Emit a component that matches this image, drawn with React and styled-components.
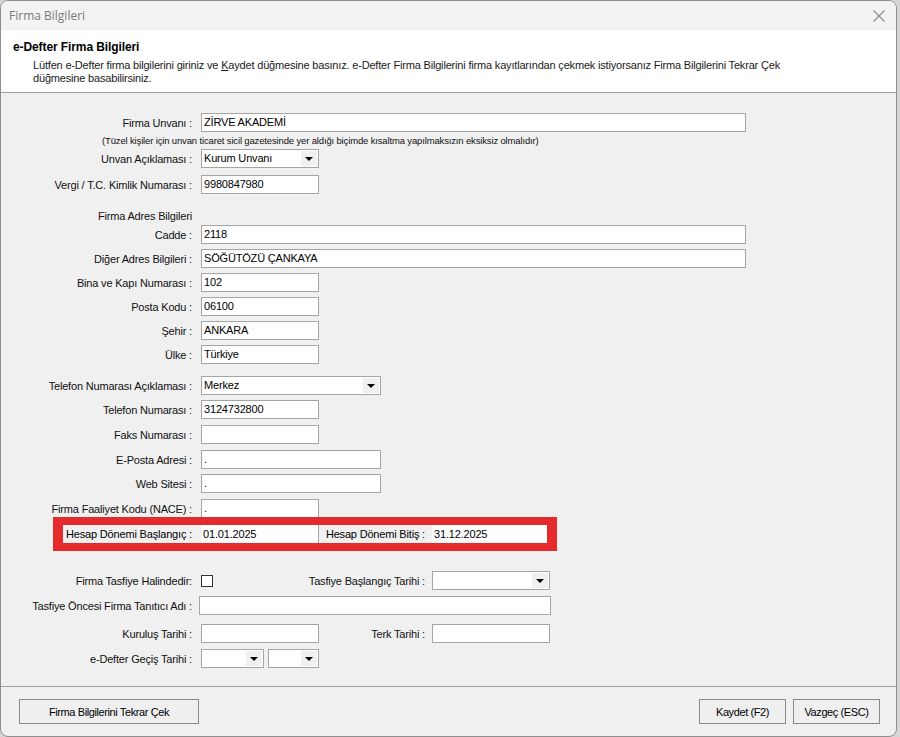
import React from "react";
import styled, { createGlobalStyle } from "styled-components";

const GlobalStyle = createGlobalStyle`
  html, body {
    margin: 0;
    padding: 0;
    background: #d6d6d6;
  }
  * {
    box-sizing: border-box;
  }
`;

const FONT = `"Liberation Sans", Arial, sans-serif`;

// Dialog shell
const Window = styled.div`
  width: 897px;
  height: 737px;
  display: flex;
  flex-direction: column;
  background: #f0f0f0;
  border: 1px solid #8e8e8e;
  border-radius: 8px;
  overflow: hidden;
  font-family: ${FONT};
  font-size: 11px;
  letter-spacing: -0.18px;
  color: #000;
`;

const TitleBar = styled.div`
  height: 29px;
  flex: none;
  display: flex;
  align-items: center;
  justify-content: space-between;
  padding: 0 8px 0 8px;
  background: #f3f3f3;
  font-family: "Open Sans", "Noto Sans", sans-serif;
  font-size: 12px;
  letter-spacing: 0;
  color: #7a7a7a;
`;

const CloseButton = styled.div`
  width: 14px;
  height: 14px;
  display: flex;
  margin-right: 2px;
`;

const Header = styled.div`
  height: 63px;
  flex: none;
  background: #fff;
  border-bottom: 1px solid #a0a0a0;
  padding: 10px 0 0 12px;
`;

const HeaderTitle = styled.div`
  font-weight: bold;
  font-size: 12px;
  letter-spacing: -0.1px;
  line-height: 14px;
`;

const HeaderText = styled.div`
  margin: 5px 0 0 20px;
  line-height: 13px;
  color: #1a1a1a;

  u {
    text-decoration: underline;
  }
`;

const Body = styled.div`
  flex: 1;
  padding-top: 20px;
`;

const Row = styled.div`
  display: flex;
  align-items: center;
  height: ${(p) => p.$h || 19}px;
  margin-top: ${(p) => p.$mt || 0}px;
  padding-left: ${(p) => p.$pl || 0}px;
`;

const Label = styled.div`
  flex: none;
  width: ${(p) => p.$w || 191}px;
  margin-right: ${(p) => p.$gap ?? 9}px;
  text-align: right;
  white-space: nowrap;
  color: #111;
`;

const Hint = styled.div`
  font-size: 9.5px;
  letter-spacing: -0.15px;
  color: #111;
  white-space: nowrap;
`;

const TextBox = styled.div`
  flex: none;
  width: ${(p) => p.$w}px;
  height: 19px;
  margin-right: ${(p) => p.$mr || 0}px;
  border: 1px solid #a5a5a5;
  background: #fff;
  padding-left: 2px;
  line-height: 17px;
  white-space: nowrap;
  overflow: hidden;
`;

const SelectBox = styled(TextBox)`
  display: flex;
  padding: 1px 1px 1px 2px;
  line-height: 15px;
`;

const SelectValue = styled.div`
  flex: 1;
`;

const ArrowBox = styled.div`
  flex: none;
  width: 16px;
  display: flex;
  align-items: center;
  justify-content: center;
  background: #f0f0f0;

  &::after {
    content: "";
    border-left: 4px solid transparent;
    border-right: 4px solid transparent;
    border-top: 4px solid #000;
    margin-top: 1px;
  }
`;

const Cell = styled.div`
  flex: none;
  width: ${(p) => p.$w}px;
  display: flex;
  align-items: center;
`;

const CheckBox = styled.div`
  width: 12px;
  height: 12px;
  border: 1px solid #333;
  background: #fff;
`;

// Red annotation around the period fields
const Highlight = styled.div`
  display: flex;
  height: 34px;
  margin-left: 52px;
  border-style: solid;
  border-color: #e52a2d;
  border-width: 8px 10px;
`;

const PeriodLabel = styled.div`
  flex: none;
  width: ${(p) => p.$w}px;
  padding-right: ${(p) => p.$pr}px;
  text-align: right;
  line-height: 18px;
  white-space: nowrap;
  background: #f0f0f0;
`;

const PeriodValue = styled.div`
  flex: none;
  width: ${(p) => p.$w}px;
  background: #fff;
  padding-left: 2px;
  line-height: 18px;
  border-right: ${(p) => (p.$edge ? "1px solid #a5a5a5" : "none")};
`;

const Footer = styled.div`
  height: 50px;
  flex: none;
  border-top: 1px solid #a0a0a0;
  display: flex;
  align-items: flex-start;
  padding: 12px 16px 0 18px;
  gap: 7px;
`;

const Button = styled.div`
  width: ${(p) => p.$w}px;
  height: 25px;
  margin-left: ${(p) => (p.$push ? "auto" : "0")};
  border: 1px solid #8a8a8a;
  background: #efefef;
  display: flex;
  align-items: center;
  justify-content: center;
  font-size: 11px;
  letter-spacing: -0.4px;
  white-space: nowrap;
`;

const Select = ({ w, value, mr }) => (
  <SelectBox $w={w} $mr={mr}>
    <SelectValue>{value}</SelectValue>
    <ArrowBox />
  </SelectBox>
);

export default function App() {
  return (
    <>
      <GlobalStyle />
      <Window>
        <TitleBar>
          <span>Firma Bilgileri</span>
          <CloseButton>
            <svg width="14" height="14" viewBox="0 0 14 14">
              <path d="M1.5 1.5 L12.5 12.5 M12.5 1.5 L1.5 12.5" stroke="#8a8a8a" strokeWidth="1.1" />
            </svg>
          </CloseButton>
        </TitleBar>

        <Header>
          <HeaderTitle>e-Defter Firma Bilgileri</HeaderTitle>
          <HeaderText>
            Lütfen e-Defter firma bilgilerini giriniz ve <u>K</u>aydet düğmesine basınız. e-Defter Firma
            Bilgilerini firma kayıtlarından çekmek istiyorsanız Firma Bilgilerini Tekrar Çek
            <br />
            düğmesine basabilirsiniz.
          </HeaderText>
        </Header>

        <Body>
          <Row>
            <Label>Firma Unvanı :</Label>
            <TextBox $w={545}>ZİRVE AKADEMİ</TextBox>
          </Row>
          <Row $h={12} $mt={2} $pl={101}>
            <Hint>
              (Tüzel kişiler için unvan ticaret sicil gazetesinde yer aldığı biçimde kısaltma yapılmaksızın eksiksiz olmalıdır)
            </Hint>
          </Row>
          <Row $mt={3}>
            <Label>Unvan Açıklaması :</Label>
            <Select w={118} value="Kurum Unvanı" />
          </Row>
          <Row $mt={7}>
            <Label>Vergi / T.C. Kimlik Numarası :</Label>
            <TextBox $w={118}>9980847980</TextBox>
          </Row>

          <Row $mt={12}>
            <Label>Firma Adres Bilgileri</Label>
          </Row>
          <Row>
            <Label>Cadde :</Label>
            <TextBox $w={545}>2118</TextBox>
          </Row>
          <Row $mt={5}>
            <Label>Diğer Adres Bilgileri :</Label>
            <TextBox $w={545}>SÖĞÜTÖZÜ ÇANKAYA</TextBox>
          </Row>
          <Row $mt={5}>
            <Label>Bina ve Kapı Numarası :</Label>
            <TextBox $w={118}>102</TextBox>
          </Row>
          <Row $mt={5}>
            <Label>Posta Kodu :</Label>
            <TextBox $w={118}>06100</TextBox>
          </Row>
          <Row $mt={5}>
            <Label>Şehir :</Label>
            <TextBox $w={118}>ANKARA</TextBox>
          </Row>
          <Row $mt={5}>
            <Label>Ülke :</Label>
            <TextBox $w={118}>Türkiye</TextBox>
          </Row>

          <Row $mt={12}>
            <Label>Telefon Numarası Açıklaması :</Label>
            <Select w={180} value="Merkez" />
          </Row>
          <Row $mt={5}>
            <Label>Telefon Numarası :</Label>
            <TextBox $w={118}>3124732800</TextBox>
          </Row>
          <Row $mt={6}>
            <Label>Faks Numarası :</Label>
            <TextBox $w={118} />
          </Row>
          <Row $mt={6}>
            <Label>E-Posta Adresi :</Label>
            <TextBox $w={180}>.</TextBox>
          </Row>
          <Row $mt={5}>
            <Label>Web Sitesi :</Label>
            <TextBox $w={180}>.</TextBox>
          </Row>
          <Row $mt={6}>
            <Label>Firma Faaliyet Kodu (NACE) :</Label>
            <TextBox $w={118}>.</TextBox>
          </Row>

          <Row $h={34} $mt={-1}>
            <Highlight>
              <PeriodLabel $w={138} $pr={9}>Hesap Dönemi Başlangıç :</PeriodLabel>
              <PeriodValue $w={118} $edge>01.01.2025</PeriodValue>
              <PeriodLabel $w={113} $pr={7}>Hesap Dönemi Bitiş :</PeriodLabel>
              <PeriodValue $w={115}>31.12.2025</PeriodValue>
            </Highlight>
          </Row>

          <Row $mt={20}>
            <Label>Firma Tasfiye Halindedir:</Label>
            <Cell $w={90}>
              <CheckBox />
            </Cell>
            <Label $w={134} $gap={7}>Tasfiye Başlangıç Tarihi :</Label>
            <Select w={118} value="" />
          </Row>
          <Row $mt={6}>
            <Label $gap={7}>Tasfiye Öncesi Firma Tanıtıcı Adı :</Label>
            <TextBox $w={352} />
          </Row>
          <Row $mt={9}>
            <Label>Kuruluş Tarihi :</Label>
            <TextBox $w={118} />
            <Label $w={106} $gap={7}>Terk Tarihi :</Label>
            <TextBox $w={118} />
          </Row>
          <Row $mt={6}>
            <Label>e-Defter Geçiş Tarihi :</Label>
            <Select w={63} value="" mr={4} />
            <Select w={51} value="" />
          </Row>
        </Body>

        <Footer>
          <Button $w={180}>Firma Bilgilerini Tekrar Çek</Button>
          <Button $w={87} $push>Kaydet (F2)</Button>
          <Button $w={87}>Vazgeç (ESC)</Button>
        </Footer>
      </Window>
    </>
  );
}
